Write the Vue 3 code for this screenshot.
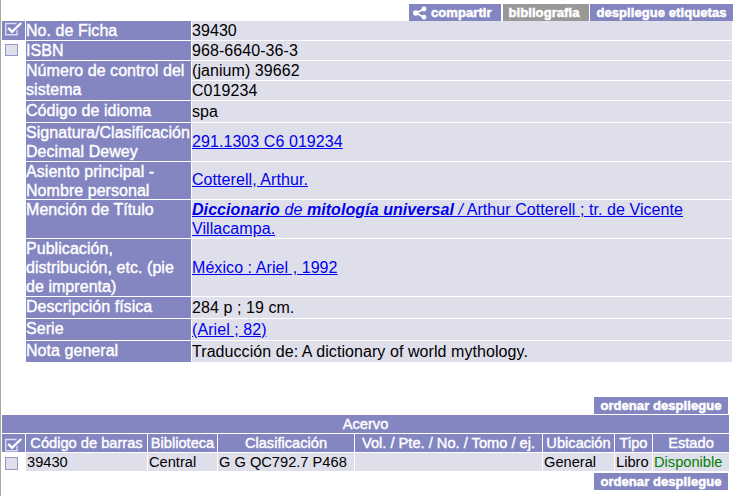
<script setup>
const records = [
  { label: 'No. de Ficha', values: ['39430'], h: 19 },
  { label: 'ISBN', values: ['968-6640-36-3'], h: 19 },
  { label: 'Número de control del sistema', values: ['(janium) 39662', 'C019234'], h: 39 },
  { label: 'Código de idioma', values: ['spa'], h: 21 },
  { label: 'Signatura/Clasificación Decimal Dewey', values: ['291.1303 C6 019234'], h: 38, link: true, raised: true },
  { label: 'Asiento principal - Nombre personal', values: ['Cotterell, Arthur.'], h: 37, link: true, raised: true },
  { label: 'Mención de Título', title: true, h: 38 },
  { label: 'Publicación, distribución, etc. (pie de imprenta)', values: ['México : Ariel , 1992'], h: 57, link: true },
  { label: 'Descripción física', values: ['284 p ; 19 cm.'], h: 21 },
  { label: 'Serie', values: ['(Ariel ; 82)'], h: 21, link: true },
  { label: 'Nota general', values: ['Traducción de: A dictionary of world mythology.'], h: 21 },
]
const headers = ['Código de barras', 'Biblioteca', 'Clasificación', 'Vol. / Pte. / No. / Tomo / ej.', 'Ubicación', 'Tipo', 'Estado']
const cells = ['39430', 'Central', 'G G QC792.7 P468', '', 'General', 'Libro', 'Disponible']
</script>

<template>
  <main class="page">
    <nav class="actions">
      <a class="btn share">
        <svg width="14" height="14" viewBox="0 0 14 14">
          <path d="M11 3 3 7 11 11.2" fill="none" stroke="#fff" stroke-width="1.8" />
          <circle cx="11" cy="3" r="2.4" fill="#fff" /><circle cx="2.8" cy="7" r="2.8" fill="#fff" /><circle cx="11" cy="11.2" r="2.4" fill="#fff" />
        </svg>
        <span>compartir</span>
      </a>
      <a class="btn biblio">bibliografia</a>
      <a class="btn tags">despliegue etiquetas</a>
    </nav>

    <section class="detail">
      <div class="checks">
        <div class="check-head">
          <svg width="19" height="14" viewBox="0 0 19 14"><path d="M12.5 1.5H1.7v11.2h11.4V8" fill="none" stroke="#dcdcf0" stroke-width="1.4" /><path d="M4.2 5.8 8 9.8 17.2 1" fill="none" stroke="#fff" stroke-width="2.4" /></svg>
        </div>
        <div class="check-body"><span class="box"></span></div>
      </div>
      <div class="rows">
        <div v-for="r in records" :key="r.label" class="row" :style="{ height: r.h + 'px' }">
          <div class="label">{{ r.label }}</div>
          <div class="values">
            <div v-if="r.title" class="value"><a class="link"><i><b>Diccionario</b> de <b>mitología universal</b> /</i> Arthur Cotterell ; tr. de Vicente Villacampa.</a></div>
            <template v-else>
              <div v-for="v in r.values" :key="v" class="value" :class="{ raised: r.raised }"><a v-if="r.link" class="link">{{ v }}</a><span v-else>{{ v }}</span></div>
            </template>
          </div>
        </div>
      </div>
    </section>

    <div class="order"><a class="btn sort">ordenar despliegue</a></div>
    <section class="holdings">
      <div class="caption">Acervo</div>
      <div class="check-head">
        <svg width="19" height="14" viewBox="0 0 19 14"><path d="M12.5 1.5H1.7v11.2h11.4V8" fill="none" stroke="#dcdcf0" stroke-width="1.4" /><path d="M4.2 5.8 8 9.8 17.2 1" fill="none" stroke="#fff" stroke-width="2.4" /></svg>
      </div>
      <div v-for="h in headers" :key="h" class="th">{{ h }}</div>
      <div class="check-cell"><span class="box"></span></div>
      <div v-for="c in cells" :key="c" class="td" :class="{ available: c === 'Disponible' }">{{ c }}</div>
    </section>
    <div class="order below"><a class="btn sort">ordenar despliegue</a></div>
  </main>
</template>

<style>
body { margin: 0; background: #fff; overflow: hidden; }
</style>
<style scoped>
.page { box-sizing: border-box; width: 736px; height: 496px; padding: 4px 0 0 1px; border-left: 1px solid #aaaa9e; font-family: "Liberation Sans", Arial, sans-serif; font-size: 16px; line-height: 19px; color: #000; background: #fff; }
.actions { display: flex; height: 17px; padding-left: 407px; }
.btn { box-sizing: border-box; display: flex; align-items: center; justify-content: center; height: 17px; font-size: 13px; font-weight: bold; line-height: 17px; letter-spacing: 0.07px; white-space: nowrap; color: #fff; background: #8486c1; -webkit-text-stroke: 0.5px #fff; }
.share { justify-content: flex-start; width: 92px; margin-right: 2px; padding-left: 4px; gap: 4px; }
.biblio { width: 86px; margin-right: 1px; padding-right: 4px; background: #999; }
.tags { width: 143px; }
.detail { display: flex; gap: 1px; height: 341px; }
.checks { width: 23px; }
.check-head { box-sizing: border-box; display: flex; align-items: flex-start; height: 19px; padding: 1px 0 0 2px; background: #8486c1; }
.check-body { padding: 4px 0 0 3px; }
.box { display: block; box-sizing: border-box; width: 13px; height: 12px; border: 1px solid #9696c8; background: #dfdfeb; }
.rows { display: flex; flex-direction: column; gap: 1px; }
.row { display: flex; gap: 1px; }
.label { width: 165px; letter-spacing: 0.05px; color: #fff; background: #8486c1; -webkit-text-stroke: 0.4px #fff; }
.values { display: flex; flex-direction: column; gap: 1px; width: 540px; letter-spacing: 0.07px; }
.value { box-sizing: border-box; display: flex; align-items: center; flex: 1; background: #dfdfeb; }
.raised { padding-bottom: 2px; }
.link { color: #0000ee; text-decoration: underline; }
.order { display: flex; padding: 35px 0 1px 592px; }
.below { padding: 2px 0 0 592px; }
.sort { width: 134px; }
.holdings { display: grid; width: 727px; grid-template-columns: 23px 121px 69px 136px 187px 71px 37px 76px; grid-template-rows: 18px 18px 18px; gap: 1px; font-size: 14.65px; line-height: 18px; white-space: nowrap; }
.holdings .check-head { height: 18px; padding-top: 4px; }
.caption { grid-column: 1 / -1; }
.caption, .th { text-align: center; color: #fff; background: #8486c1; -webkit-text-stroke: 0.4px #fff; }
.td { padding-left: 1px; background: #dfdfeb; }
.check-cell { padding: 4px 0 0 3px; }
.check-cell .box { height: 13px; }
.available { color: #008000; }
</style>
